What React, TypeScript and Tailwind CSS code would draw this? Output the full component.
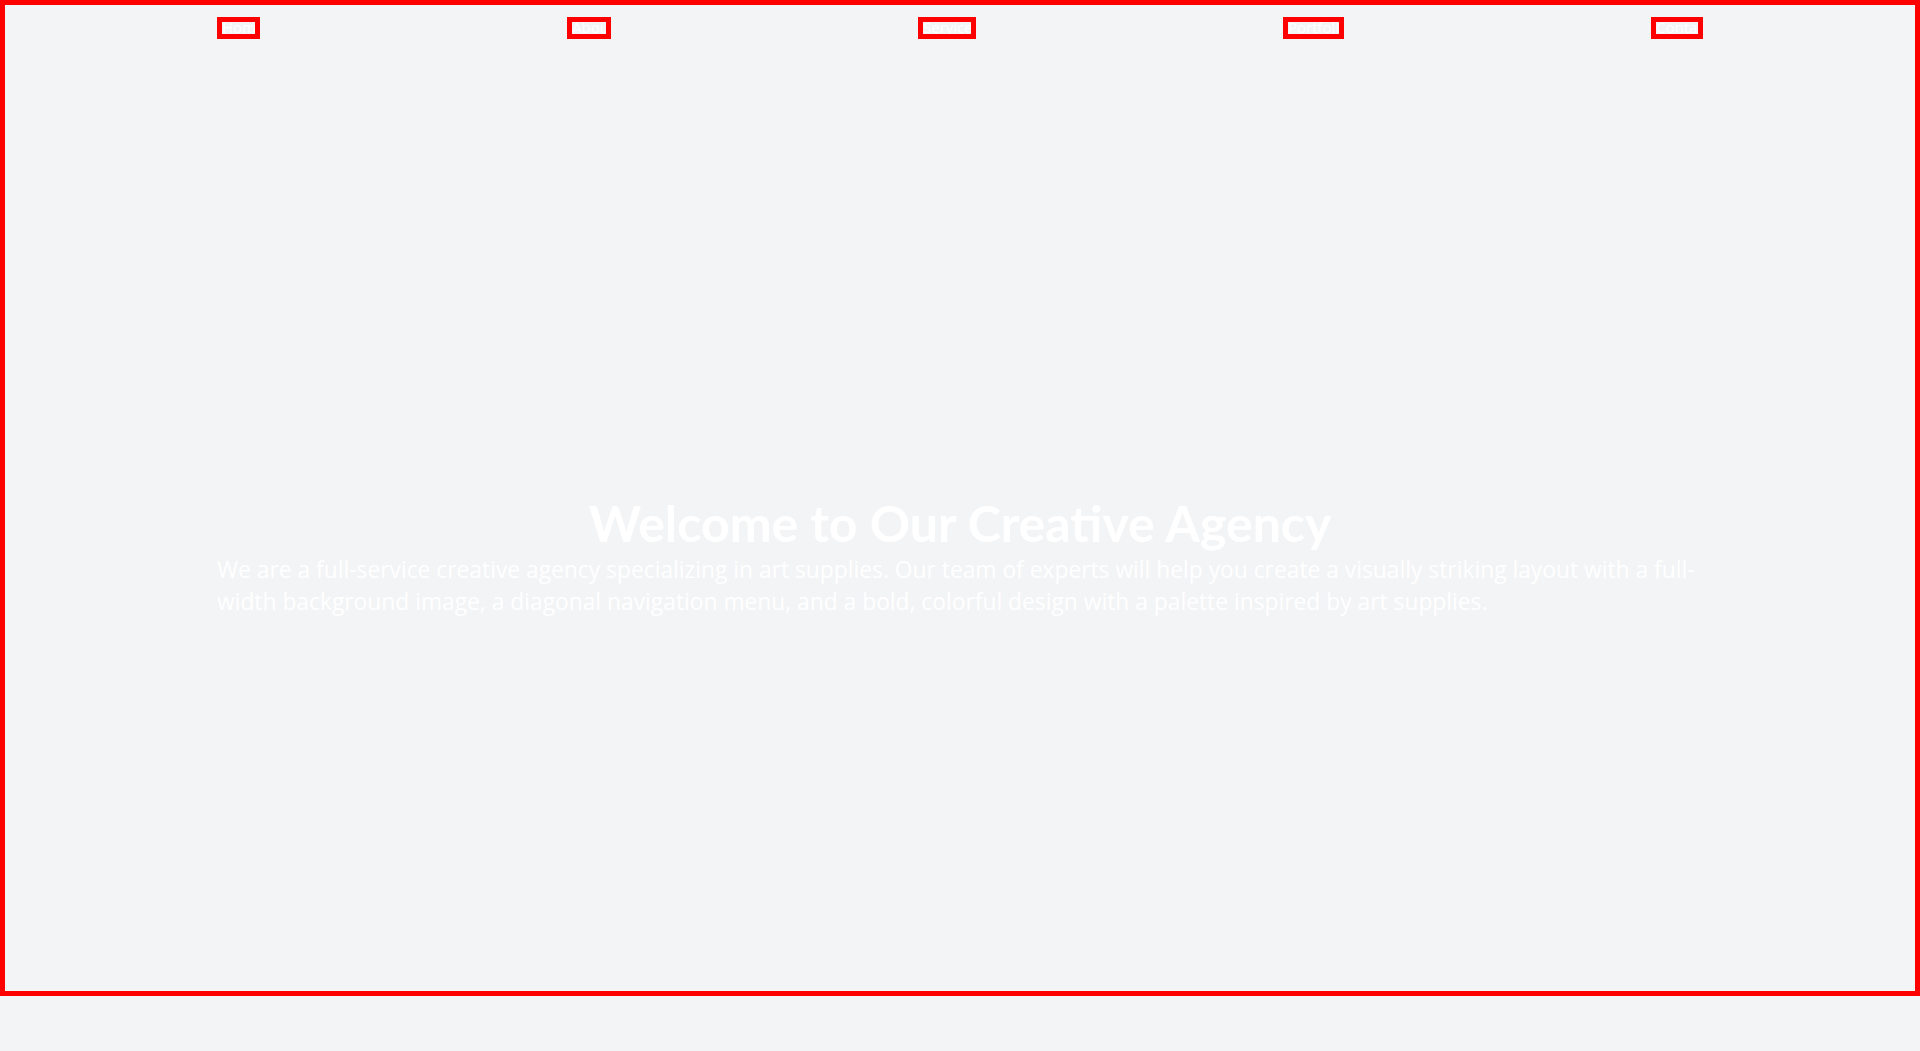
import React from 'react';

const links = [
  { label: 'Home', width: 'w-[43px]' },
  { label: 'About', width: 'w-[44px]' },
  { label: 'Services', width: 'w-[58px]' },
  { label: 'Portfolio', width: 'w-[61px]' },
  { label: 'Contact', width: 'w-[52px]' },
];

export default function App() {
  return (
    <div className="min-h-[1051px] bg-[#f3f4f6] font-['Open_Sans',sans-serif]">
      <div className="h-[996px] border-[5px] border-[#ff0000] flex flex-col">
        {/* Nav */}
        <nav className="mx-auto w-[1486px] pt-[12px] flex justify-between">
          {links.map((l) => (
            <a
              key={l.label}
              href="#"
              className={`${l.width} h-[22px] border-[5px] border-[#ff0000] overflow-hidden whitespace-nowrap text-white text-[15px] leading-none`}
            >
              <span className="block -mt-[2px]">{l.label}</span>
            </a>
          ))}
        </nav>

        {/* Hero */}
        <section className="mx-auto w-[1486px] pt-[459px] text-white">
          <h1 className="font-['Lato',sans-serif] text-[50px] leading-none font-bold text-center mb-[6px]">
            Welcome to Our Creative Agency
          </h1>
          <p className="text-[22.8px] leading-8">
            We are a full-service creative agency specializing in art supplies. Our team of experts will help you create a visually striking layout with a full-width background image, a diagonal navigation menu, and a bold, colorful design with a palette inspired by art supplies.
          </p>
        </section>
      </div>
    </div>
  );
}
